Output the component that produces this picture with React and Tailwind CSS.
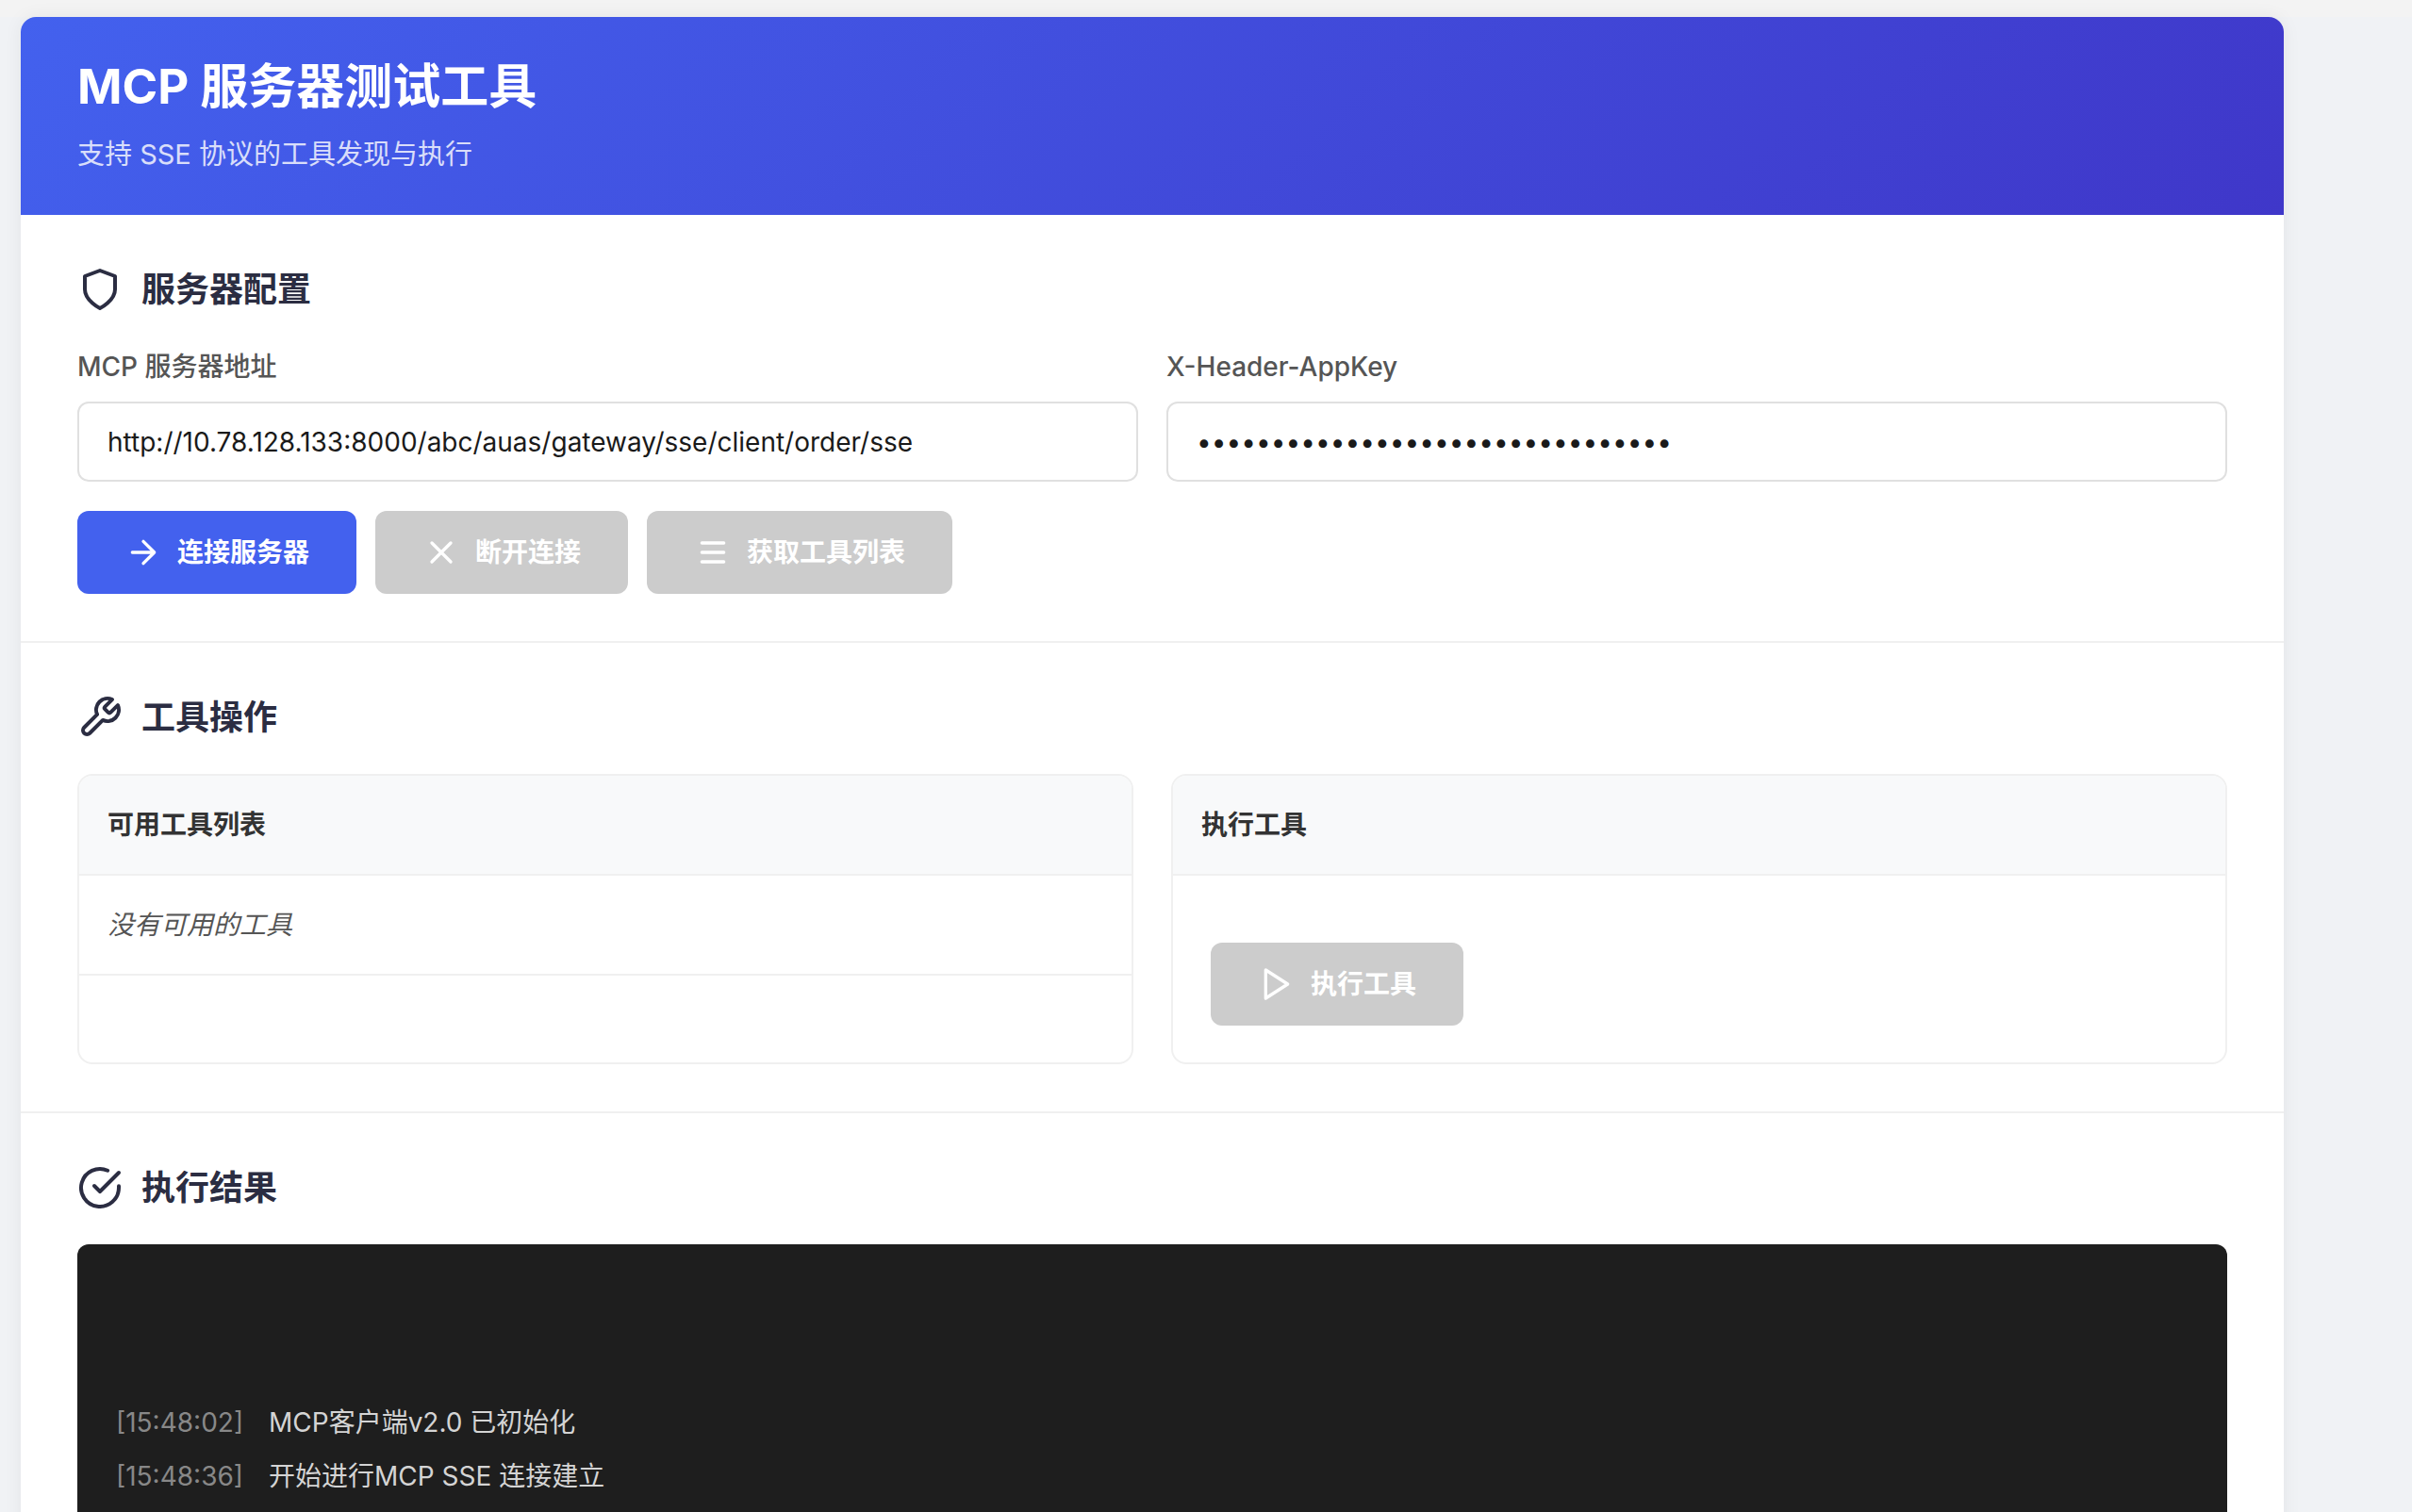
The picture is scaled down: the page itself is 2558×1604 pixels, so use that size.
import React from "react";

const Ico = ({ size = 40, sw = 2, className = "", children }) => (
  <svg
    width={size}
    height={size}
    viewBox="0 0 24 24"
    fill="none"
    stroke="currentColor"
    strokeWidth={sw}
    strokeLinecap="round"
    strokeLinejoin="round"
    className={`shrink-0 ${className}`}
  >
    {children}
  </svg>
);

const SectionTitle = ({ icon, children }) => (
  <div className="flex items-center gap-5 h-[58px] mb-[31px]">
    <Ico size={48} className="text-[#2b2d42]">{icon}</Ico>
    <h2 className="text-[36px] font-semibold text-[#2b2d42]">{children}</h2>
  </div>
);

const Btn = ({ icon, disabled, children }) => (
  <button
    className={`flex items-center gap-4 h-[88px] px-[50px] rounded-[12px] text-[28px] font-semibold text-white ${
      disabled ? "bg-[#cccccc]" : "bg-[#4361ee]"
    }`}
  >
    <Ico>{icon}</Ico>
    {children}
  </button>
);

const Field = ({ label, type, value }) => (
  <div className="flex-1 flex flex-col">
    <label className="text-[28px] leading-[45px] mb-[14px] font-medium text-[#555555]">{label}</label>
    <input
      type={type}
      value={value}
      readOnly
      className="h-[85px] px-[30px] border-2 border-[#e0e0e0] rounded-[12px] text-[28px] text-[#1a1a1a] outline-none"
    />
  </div>
);

const Panel = ({ title, children }) => (
  <div className="flex-1 h-[308px] flex flex-col border-2 border-[#f0f0f0] rounded-[16px] overflow-hidden">
    <div className="h-[106px] shrink-0 flex items-center px-[30px] bg-[#f8f9fa] border-b-2 border-[#f0f0f0] text-[28px] font-semibold text-[#333333]">
      {title}
    </div>
    {children}
  </div>
);

const LogLine = ({ time, children }) => (
  <div className="flex h-[57px] items-center text-[28px]">
    <span className="w-[162px] text-[#888888]">{time}</span>
    <span className="text-[#d4d4d4]">{children}</span>
  </div>
);

export default function App() {
  return (
    <div className="h-[1604px] overflow-hidden bg-[#f0f2f5] font-[Inter,'Noto_Sans_CJK_SC',sans-serif]">
      <div className="h-[18px] bg-[#f3f3f3]" />
      <div className="ml-[22px] w-[2400px] bg-white rounded-t-[16px] overflow-hidden shadow-[0_0_20px_rgba(0,0,0,0.06)]">
        <header className="h-[210px] flex flex-col px-[60px] pt-[42px] bg-[linear-gradient(135deg,#4361ee,#3f37c9)] text-white">
          <h1 className="text-[51px] leading-[64px] font-bold">MCP 服务器测试工具</h1>
          <p className="text-[29px] leading-[46px] mt-[17px] opacity-80">支持 SSE 协议的工具发现与执行</p>
        </header>

        <section className="px-[60px] py-[50px] border-b-2 border-[#f0f0f0]">
          <SectionTitle icon={<path d="M12 22s8-4 8-10V5l-8-3-8 3v7c0 6 8 10 8 10z" />}>服务器配置</SectionTitle>
          <div className="flex gap-[30px]">
            <Field label="MCP 服务器地址" type="text" value="http://10.78.128.133:8000/abc/auas/gateway/sse/client/order/sse" />
            <Field label="X-Header-AppKey" type="password" value="abcdefghijklmnopqrstuvwxyz123456" />
          </div>
          <div className="flex gap-5 mt-[31px]">
            <Btn icon={<path d="M5 12h14M12 5l7 7-7 7" />}>连接服务器</Btn>
            <Btn disabled icon={<path d="M18 6 6 18M6 6l12 12" />}>断开连接</Btn>
            <Btn disabled icon={<path d="M5 6h14M5 12h14M5 18h14" />}>获取工具列表</Btn>
          </div>
        </section>

        <section className="px-[60px] py-[50px] border-b-2 border-[#f0f0f0]">
          <SectionTitle icon={<path d="M14.7 6.3a1 1 0 0 0 0 1.4l1.6 1.6a1 1 0 0 0 1.4 0l3.77-3.77a6 6 0 0 1-7.94 7.94l-6.91 6.91a2.12 2.12 0 0 1-3-3l6.91-6.91a6 6 0 0 1 7.94-7.94l-3.76 3.76z" />}>工具操作</SectionTitle>
          <div className="flex gap-10">
            <Panel title="可用工具列表">
              <div className="h-[106px] shrink-0 flex items-center px-[30px] border-b-2 border-[#f0f0f0] text-[28px] italic text-[#555555]">
                没有可用的工具
              </div>
            </Panel>
            <Panel title="执行工具">
              <div className="flex-1 flex items-end px-[40px] pb-[39px]">
                <Btn disabled icon={<path d="m5 3 14 9-14 9V3z" />}>执行工具</Btn>
              </div>
            </Panel>
          </div>
        </section>

        <section className="px-[60px] pt-[50px] pb-[50px]">
          <SectionTitle
            icon={
              <>
                <path d="M22 11.08V12a10 10 0 1 1-5.93-9.14" />
                <path d="M22 4 12 14.01l-3-3" />
              </>
            }
          >
            执行结果
          </SectionTitle>
          <div className="h-[500px] bg-[#1e1e1e] rounded-[12px] px-[41px] pt-[160px]">
            <LogLine time="[15:48:02]">MCP客户端v2.0 已初始化</LogLine>
            <LogLine time="[15:48:36]">开始进行MCP SSE 连接建立</LogLine>
          </div>
        </section>
      </div>
    </div>
  );
}
